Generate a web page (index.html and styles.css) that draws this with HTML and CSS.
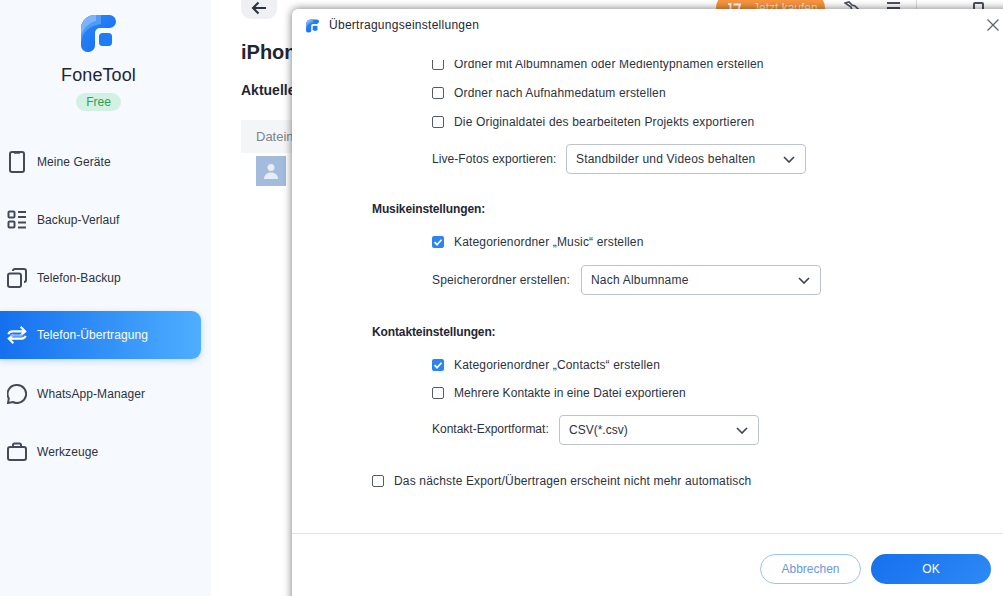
FILE: index.html
```html
<!DOCTYPE html>
<html lang="de">
<head>
    <meta charset="UTF-8">
    <meta name="viewport" content="width=device-width, initial-scale=1.0">
    <title>FoneTool</title>
    <link rel="stylesheet" href="styles.css">
</head>
<body>
    <svg class="defs" width="0" height="0">
        <defs>
            <linearGradient id="logoGrad" x1="0" y1="0" x2="1" y2="1">
                <stop offset="0" stop-color="#2d8cfb"/>
                <stop offset="1" stop-color="#1168ee"/>
            </linearGradient>
            <clipPath id="logoClip">
                <path d="M14 0H28.500A6.500 6.500 0 0 1 28.500 13H19A5 5 0 0 0 14 18V30.500A6.500 6.500 0 0 1 7.500 37H6.500A6.500 6.500 0 0 1 0 30.500V14A14 14 0 0 1 14 0Z"/>
            </clipPath>
            <symbol id="logo" viewBox="0 0 35 37">
                <g clip-path="url(#logoClip)">
                    <rect width="35" height="37" fill="url(#logoGrad)"/>
                    <path d="M0 27C2 16 8 11 20 9V0H0Z" fill="#4f9bfa"/>
                    <path d="M0 20C3 12 8 8 15 6V0H0Z" fill="#7db4fb"/>
                </g>
                <rect x="18" y="18" width="13" height="13" rx="3.500" fill="#1e7cf5"/>
            </symbol>
        </defs>
    </svg>

    <div class="app">
        <!-- Sidebar -->
        <aside class="sidebar">
            <div class="brand-box">
                <svg class="logo" width="35" height="37"><use href="#logo"/></svg>
                <div class="brand">FoneTool</div>
                <div class="plan">Free</div>
            </div>
            <nav class="nav">
                <div class="nav-item">
                    <svg viewBox="0 0 20 24" width="20" height="24" fill="none" stroke="currentColor" stroke-width="2"><rect x="3" y="2" width="14" height="20" rx="2"/><path d="M7 2.500h6" stroke-width="2.500"/></svg>
                    <span>Meine Geräte</span>
                </div>
                <div class="nav-item">
                    <svg viewBox="0 0 20 20" width="20" height="20" fill="none" stroke="currentColor" stroke-width="2"><rect x="1.500" y="1.500" width="6" height="6" rx="1"/><rect x="1.500" y="11.500" width="6" height="6" rx="1"/><path d="M11 2h8M11 7h8M11 12.500h8M11 17.500h8"/></svg>
                    <span>Backup-Verlauf</span>
                </div>
                <div class="nav-item">
                    <svg viewBox="0 0 20 20" width="20" height="20" fill="none" stroke="currentColor" stroke-width="2"><rect x="1" y="5.500" width="13" height="13.500" rx="2"/><path d="M6 3a2 2 0 0 1 2-2h9a2 2 0 0 1 2 2v9a2 2 0 0 1-2 2"/></svg>
                    <span>Telefon-Backup</span>
                </div>
                <div class="nav-item active">
                    <svg viewBox="0 0 22 20" width="22" height="20" fill="none" stroke="currentColor" stroke-width="2.400"><path d="M1.500 9C2.500 6.500 4 6 6 6h14M15 1l5 5-5 4.500"/><path d="M20.500 11c-1 2.500-2.500 3-4.500 3H2M7 9.500 2 14l5 5"/><path d="M4 10.500h13" stroke="#8db8f5" stroke-width="2.600"/></svg>
                    <span>Telefon-Übertragung</span>
                </div>
                <div class="nav-item">
                    <svg viewBox="0 0 20 20" width="20" height="20" fill="none" stroke="currentColor" stroke-width="2"><path d="M10 1a9 9 0 1 1-4 17l-5 1 .8-4.500A9 9 0 0 1 10 1Z"/></svg>
                    <span>WhatsApp-Manager</span>
                </div>
                <div class="nav-item">
                    <svg viewBox="0 0 20 20" width="20" height="20" fill="none" stroke="currentColor" stroke-width="2"><rect x="1" y="5" width="18" height="13" rx="2"/><path d="M6 5V3a1.500 1.500 0 0 1 1.500-1.500h5A1.500 1.500 0 0 1 14 3v2"/></svg>
                    <span>Werkzeuge</span>
                </div>
            </nav>
        </aside>

        <!-- Main page behind the dialog -->
        <main class="main">
            <div class="topbar">
                <button class="back">
                    <svg viewBox="0 0 16 14" width="16" height="14" fill="none" stroke="#2b3240" stroke-width="2"><path d="M15 7H2M7.500 1.500 2 7l5.500 5.500"/></svg>
                </button>
                <div class="top-actions">
                    <div class="buy">
                        <svg viewBox="0 0 14 12" width="14" height="12" fill="none" stroke="#fff" stroke-width="1.800"><path d="M1 2h2.500v9M6.500 2.500H13l-2 7"/></svg>
                        <span>Jetzt kaufen</span>
                    </div>
                    <svg class="tool" viewBox="0 0 16 16" width="16" height="16" fill="none" stroke="#4a5160" stroke-width="1.600"><path d="M1 3l4-1 3 3 3 1 4 4-3 4-4-4-1-3z"/></svg>
                    <div class="menu-bars"></div>
                    <div class="sep"></div>
                    <div class="restore"></div>
                </div>
            </div>
            <h1 class="page-title">iPhone</h1>
            <div class="page-sub">Aktueller Status</div>
            <div class="table-head">Dateiname</div>
            <div class="avatar">
                <svg viewBox="0 0 30 30" width="30" height="30" fill="#e6edf7"><circle cx="15" cy="11.500" r="3.500"/><path d="M8 23c0-4 3-6.500 7-6.500s7 2.500 7 6.500z"/></svg>
            </div>
        </main>
    </div>

    <!-- Dialog -->
    <div class="dialog">
        <div class="dialog-head">
            <svg class="dialog-logo" width="13" height="14"><use href="#logo"/></svg>
            <span>Übertragungseinstellungen</span>
            <svg class="close" viewBox="0 0 12 12" width="12" height="12" fill="none" stroke="#5f6672" stroke-width="1.300"><path d="M.5.500l11 11M11.500.500l-11 11"/></svg>
        </div>
        <div class="dialog-body">
            <div class="settings">
                <div class="group indent loose">
                    <label class="check-row"><i class="box"></i>Ordner mit Albumnamen oder Medientypnamen erstellen</label>
                    <label class="check-row"><i class="box"></i>Ordner nach Aufnahmedatum erstellen</label>
                    <label class="check-row"><i class="box"></i>Die Originaldatei des bearbeiteten Projekts exportieren</label>
                    <div class="select-row">
                        <span class="field-label live">Live-Fotos exportieren:</span>
                        <div class="select wide">Standbilder und Videos behalten<svg viewBox="0 0 12 7" width="12" height="7" fill="none" stroke="#3a4150" stroke-width="1.600"><path d="M1 1l5 5 5-5"/></svg></div>
                    </div>
                </div>

                <div class="section-title music">Musikeinstellungen:</div>
                <div class="group indent">
                    <label class="check-row"><i class="box on"><svg viewBox="0 0 12 12" width="12" height="12" fill="none" stroke="#fff" stroke-width="1.700"><path d="M2.500 6.200l2.500 2.500 4.500-5"/></svg></i>Kategorienordner „Music“ erstellen</label>
                    <div class="select-row">
                        <span class="field-label folder">Speicherordner erstellen:</span>
                        <div class="select wide">Nach Albumname<svg viewBox="0 0 12 7" width="12" height="7" fill="none" stroke="#3a4150" stroke-width="1.600"><path d="M1 1l5 5 5-5"/></svg></div>
                    </div>
                </div>

                <div class="section-title contacts">Kontakteinstellungen:</div>
                <div class="group indent">
                    <label class="check-row"><i class="box on"><svg viewBox="0 0 12 12" width="12" height="12" fill="none" stroke="#fff" stroke-width="1.700"><path d="M2.500 6.200l2.500 2.500 4.500-5"/></svg></i>Kategorienordner „Contacts“ erstellen</label>
                    <label class="check-row tight"><i class="box"></i>Mehrere Kontakte in eine Datei exportieren</label>
                    <div class="select-row format">
                        <span class="field-label contact">Kontakt-Exportformat:</span>
                        <div class="select narrow">CSV(*.csv)<svg viewBox="0 0 12 7" width="12" height="7" fill="none" stroke="#3a4150" stroke-width="1.600"><path d="M1 1l5 5 5-5"/></svg></div>
                    </div>
                </div>

                <label class="check-row last"><i class="box"></i>Das nächste Export/Übertragen erscheint nicht mehr automatisch</label>
            </div>
        </div>
        <div class="dialog-foot">
            <button class="btn ghost">Abbrechen</button>
            <button class="btn primary">OK</button>
        </div>
    </div>
</body>
</html>
```

FILE: styles.css
```css
html, body {
    margin: 0;
    padding: 0;
    height: 100%;
    overflow: hidden;
    background: #fff;
    font-family: "Liberation Sans", Arial, sans-serif;
    font-size: 12px;
    color: #2b3240;
}

.defs {
    position: absolute;
}

.app {
    display: flex;
    height: 596px;
}

/* Sidebar */
.sidebar {
    width: 211px;
    flex: none;
    display: flex;
    flex-direction: column;
    background: #f6f9fe;
}

.brand-box {
    width: 197px;
    display: flex;
    flex-direction: column;
    align-items: center;
}

.logo {
    margin-top: 15px;
}

.brand {
    margin-top: 12px;
    font-size: 18px;
    line-height: 22px;
    letter-spacing: 0.1px;
    color: #1f2633;
}

.plan {
    margin-top: 7px;
    width: 45px;
    height: 18px;
    line-height: 18px;
    text-align: center;
    border-radius: 9px;
    background: #d3f1e0;
    color: #27a05f;
}

.nav {
    width: 100%;
    margin-top: 27px;
    display: flex;
    flex-direction: column;
    gap: 10px;
}

.nav-item {
    width: 201px;
    height: 48px;
    display: flex;
    align-items: center;
    color: #444b58;
    box-sizing: border-box;
    border-radius: 0 9px 9px 0;
}

.nav-item svg {
    width: 20px;
    margin-left: 7px;
    flex: none;
}

.nav-item span {
    margin-left: 10px;
    letter-spacing: 0.08px;
    color: #2b3240;
}

.nav-item.active {
    margin: -1px 0 1px;
    background: linear-gradient(90deg, #1470ee, #4eaeff);
    box-shadow: 0 2px 6px rgba(60, 140, 250, 0.3);
    color: #fff;
}

.nav-item.active span {
    color: #fff;
}

/* Main */
.main {
    flex: 1;
    min-width: 0;
    padding-left: 30px;
    overflow: hidden;
}

.topbar {
    display: flex;
    justify-content: space-between;
    align-items: flex-start;
    height: 34px;
    margin-top: -9px;
}

.back {
    width: 36px;
    height: 28px;
    padding: 9px 0 0;
    border: none;
    border-radius: 10px;
    background: #eef0f4;
}

.top-actions {
    display: flex;
    align-items: center;
    height: 34px;
}

.buy {
    width: 109px;
    height: 30px;
    box-sizing: border-box;
    padding-left: 11px;
    display: flex;
    align-items: center;
    gap: 12px;
    border-radius: 15px;
    background: #f8953f;
    color: #fde3cc;
}

.tool {
    margin-left: 19px;
}

.menu-bars {
    width: 13px;
    height: 8px;
    margin-left: 27px;
    border-top: 2px solid #4a5160;
    border-bottom: 2px solid #4a5160;
    background: linear-gradient(#4a5160, #4a5160) center / 100% 2px no-repeat;
}

.sep {
    width: 1px;
    height: 34px;
    margin-left: 16px;
    background: #d8dbe0;
}

.restore {
    width: 7px;
    height: 8px;
    margin: 0 19px 0 56px;
    border: 2px solid #4a5160;
    border-radius: 2px;
}

.page-title {
    margin: 12px 0 0;
    font-size: 20px;
    line-height: 30px;
    font-weight: bold;
    color: #1f2633;
}

.page-sub {
    margin-top: 13px;
    font-size: 14px;
    line-height: 20px;
    font-weight: bold;
    color: #1f2633;
}

.table-head {
    margin-top: 20px;
    height: 33px;
    line-height: 33px;
    padding-left: 15px;
    font-size: 13px;
    background: #f4f5f7;
    color: #7d8492;
}

.avatar {
    width: 30px;
    height: 30px;
    margin: 3px 0 0 15px;
    background: #a3bbdc;
}

/* Dialog */
.dialog {
    position: absolute;
    left: 292px;
    top: 9px;
    width: 720px;
    height: 600px;
    display: flex;
    flex-direction: column;
    background: #fff;
    border-radius: 6px 0 0 0;
    box-shadow: 0 0 9px rgba(0, 0, 0, 0.55);
}

.dialog-head {
    height: 51px;
    flex: none;
    display: flex;
    align-items: flex-start;
    box-sizing: border-box;
    padding: 10px 0 0 14px;
    line-height: 13px;
    color: #1f2633;
}

.dialog-logo {
    flex: none;
}

.dialog-head span {
    margin-left: 10px;
    letter-spacing: 0.27px;
}

.close {
    position: absolute;
    left: 695px;
    top: 10px;
}

.dialog-body {
    height: 473px;
    flex: none;
    overflow: hidden;
}

.settings {
    margin-top: -11px;
    padding-left: 80px;
    color: #2b3240;
    letter-spacing: 0.16px;
}

.indent {
    padding-left: 60px;
}

.check-row {
    height: 28px;
    display: flex;
    align-items: center;
    gap: 10px;
}

.check-row.tight {
    letter-spacing: 0.07px;
}

.loose .check-row {
    height: 29px;
}

.box {
    width: 12px;
    height: 12px;
    flex: none;
    border: 1.2px solid #555c69;
    border-radius: 2px;
    box-sizing: border-box;
    background: #fff;
}

.box.on {
    border: none;
    background: #2e83f2;
}

.box svg {
    display: block;
}

.select-row {
    display: flex;
    align-items: center;
    margin-top: 9px;
}

.loose .select-row {
    margin-top: 8px;
}

.select-row.format {
    margin-top: 8px;
}

.field-label {
    flex: none;
}

.field-label.live {
    width: 134px;
    letter-spacing: 0.07px;
}

.field-label.folder {
    width: 149px;
}

.field-label.contact {
    width: 127px;
    margin-top: -3px;
    letter-spacing: 0;
}

.select {
    height: 30px;
    box-sizing: border-box;
    display: flex;
    align-items: center;
    justify-content: space-between;
    padding: 0 10px 0 9px;
    border: 1px solid #bcc4d0;
    border-radius: 4px;
    background: #fff;
    letter-spacing: 0.2px;
}

.select.wide {
    width: 240px;
}

.select.narrow {
    width: 200px;
    letter-spacing: 0;
}

.section-title {
    font-weight: bold;
    line-height: 20px;
    letter-spacing: -0.12px;
    color: #1f2633;
}

.section-title.music {
    margin-top: 25px;
    margin-bottom: 9px;
}

.section-title.contacts {
    margin-top: 27px;
    margin-bottom: 9px;
}

.check-row.last {
    margin-top: 22px;
}

.dialog-foot {
    flex: none;
    display: flex;
    justify-content: flex-end;
    gap: 10px;
    padding: 20px 21px 0 0;
    border-top: 1px solid #e2e2e2;
}

.btn {
    height: 30px;
    border-radius: 15px;
    font: inherit;
    padding: 0;
}

.btn.ghost {
    width: 101px;
    background: #fff;
    border: 1px solid #9cc2fa;
    color: #6a97e0;
}

.btn.primary {
    width: 120px;
    border: none;
    background: linear-gradient(135deg, #1570ee, #2e8af5);
    color: #fff;
}
```
